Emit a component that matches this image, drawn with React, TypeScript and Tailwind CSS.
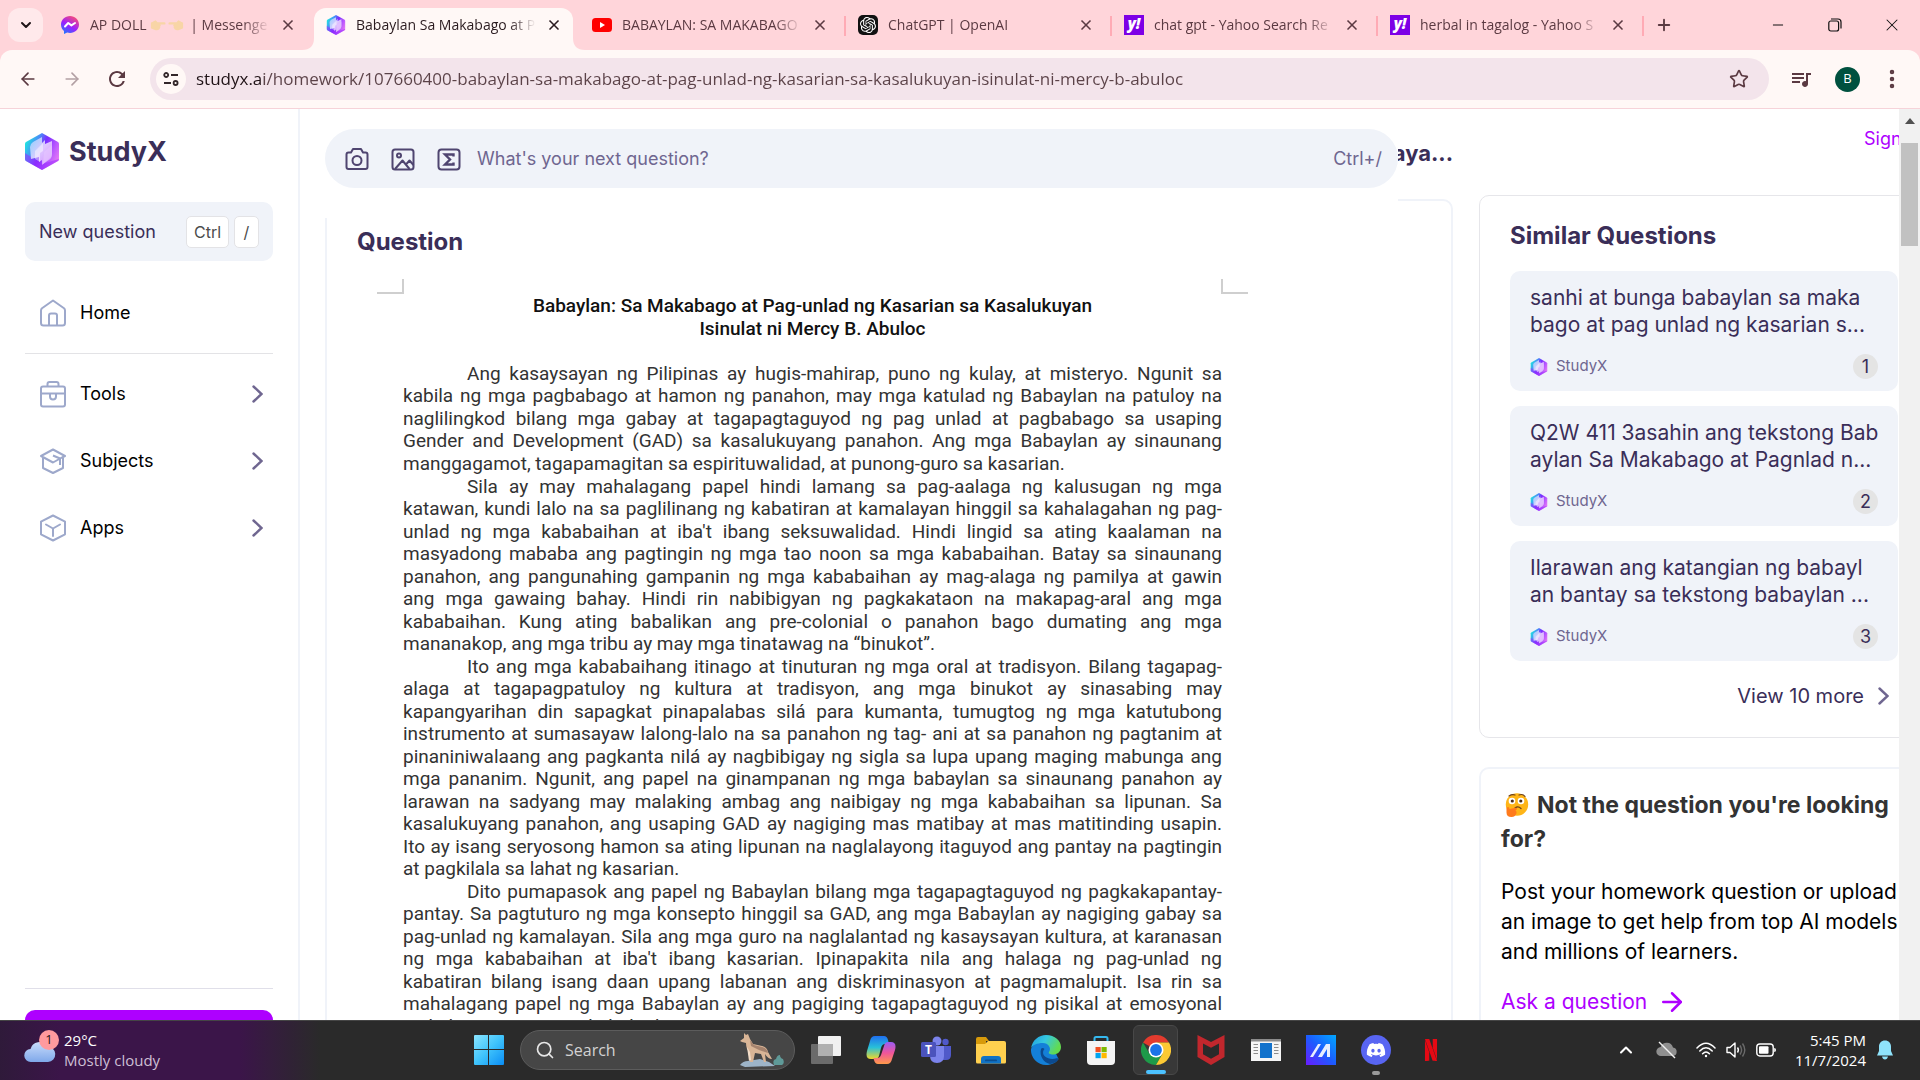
import React from "react"
import {
  ArrowLeft,
  ArrowRight,
  ChevronDown,
  ChevronUp,
  Minus,
  MoreVertical,
  Plus,
  Search,
  Star,
  X,
} from "lucide-react"
import { FaDiscord } from "react-icons/fa"
import { MdOutlineQueueMusic, MdRefresh } from "react-icons/md"
import { SiNetflix, SiOpenai } from "react-icons/si"

/* ---------- icons ---------- */

const StudyXLogo = ({ className }: { className?: string }) => (
  <svg viewBox="0 0 34 37" className={className} aria-hidden="true">
    <defs>
      <linearGradient id="sx-body" x1="0" y1="0.2" x2="1" y2="0.7">
        <stop offset="0" stopColor="#19f0dc" />
        <stop offset="0.3" stopColor="#4a8cf8" />
        <stop offset="0.5" stopColor="#7a2cff" />
        <stop offset="0.75" stopColor="#b455ff" />
        <stop offset="1" stopColor="#e87bf5" />
      </linearGradient>
      <linearGradient id="sx-page" x1="0" y1="0" x2="1" y2="1">
        <stop offset="0" stopColor="#9fd0ff" />
        <stop offset="0.5" stopColor="#efe2ff" />
        <stop offset="1" stopColor="#d48bff" />
      </linearGradient>
    </defs>
    <path d="M17 0 33 9q1 .6 1 2v15q0 1.400-1 2L17 37 1 28q-1-.6-1-2V11q0-1.400 1-2Z" fill="url(#sx-body)" />
    <path d="M0 20v6q0 1.400 1 2l16 9 16-9q1-.6 1-2l-17 5Z" fill="#9a2bff" opacity=".55" />
    <path d="M5 14q0-3 3-5l9-5v6l3-3v4l7-3v13q0 3-3 5l-7 6v-5l-3 2v-5l-8 2Z" fill="url(#sx-page)" opacity=".85" />
    <path d="m10 18 8-8v8l-3 2v9l-5-3Z" fill="#fff" opacity=".45" />
    <path d="m19 19 8-7v9q0 4-3 6l-6 4Z" fill="#e4c4ff" opacity=".7" />
  </svg>
)

const MessengerIcon = () => (
  <svg viewBox="0 0 20 20" className="size-5 shrink-0" aria-hidden="true">
    <defs>
      <linearGradient id="msgr" x1="0.2" y1="1" x2="0.8" y2="0">
        <stop offset="0" stopColor="#1a7bff" />
        <stop offset="0.45" stopColor="#9b1fff" />
        <stop offset="1" stopColor="#ff4f6e" />
      </linearGradient>
    </defs>
    <path d="M10 1c5 0 9 3.700 9 8.500S15 18 10 18q-1.500 0-2.800-.4L4 19v-3C2.200 14.500 1 12.200 1 9.500 1 4.700 5 1 10 1Z" fill="url(#msgr)" />
    <path d="m5 11.500 3.200-3.500 3.200 2.400L15 8" stroke="#fff" strokeWidth="2" fill="none" strokeLinejoin="round" strokeLinecap="round" />
  </svg>
)

const YoutubeIcon = () => (
  <svg viewBox="0 0 20 20" className="size-5 shrink-0" aria-hidden="true">
    <rect x="0" y="3" width="20" height="14" rx="3.500" fill="#f00" />
    <path d="m8 7 5 3-5 3Z" fill="#fff" />
  </svg>
)

const OpenAiTile = () => (
  <span className="flex size-5 shrink-0 items-center justify-center rounded-[5px] bg-[#111]">
    <SiOpenai className="size-4 text-white" />
  </span>
)

const YahooTile = () => (
  <span className="flex size-5 shrink-0 items-center justify-center bg-[#7d00e6] pb-1 text-[15px] font-black italic text-white">
    y!
  </span>
)

const PointingHands = () => (
  <svg viewBox="0 0 38 16" className="mx-0.5 inline-block h-4 w-[36px] align-[-3px]" fill="#f8d5a6" aria-hidden="true">
    <path d="M2 6q0-1 1-1l4-2 2 2h7q1.500 0 1.500 1.300T16 7.600h-4q1 1-.2 1.900.6 1-.4 1.800.2 1-.9 1.500Q9.500 14 7 13.500L3 12q-1 0-1-1Z" />
    <path d="M36 6q0-1-1-1l-4-2-2 2h-7q-1.500 0-1.500 1.300T22 7.600h4q-1 1 .2 1.900-.6 1 .4 1.800-.2 1 .9 1.500 1 1.200 3.500.7L35 12q1 0 1-1Z" />
  </svg>
)

const TuneIcon = () => (
  <svg viewBox="0 0 16 16" className="size-4" fill="none" stroke="#33272a" strokeWidth="1.800" aria-hidden="true">
    <circle cx="3.200" cy="4" r="2" />
    <path d="M8 4h7M1 12h7" />
    <circle cx="12.600" cy="12" r="2" />
  </svg>
)

const RestoreIcon = () => (
  <svg viewBox="0 0 14 14" className="size-3.5" fill="none" stroke="#111" strokeWidth="1.200" aria-hidden="true">
    <rect x="0.800" y="3" width="9.800" height="10" rx="2" />
    <path d="M3 1h7q3 0 3 3v6.500" />
  </svg>
)

const Chevron = ({ className }: { className?: string }) => (
  <svg viewBox="0 0 11 18" className={`h-[18px] w-[11px] ${className}`} fill="none" stroke="#6f6690" strokeWidth="2.400" strokeLinecap="round" aria-hidden="true">
    <path d="m1.500 1.500 8 7.500-8 7.500" />
  </svg>
)

const HomeIcon = () => (
  <svg viewBox="0 0 26 28" className="h-7 w-[26px]" fill="none" stroke="#9da8cb" strokeWidth="2" strokeLinejoin="round" aria-hidden="true">
    <path d="M1 11.500q0-1.500 1-2.300L13 1.500l11 7.700q1 .8 1 2.300V24q0 2.500-2.500 2.500h-19Q1 26.500 1 24Z" />
    <path d="M9 26v-9.500q0-2 2-2h4q2 0 2 2V26" />
  </svg>
)

const ToolsIcon = () => (
  <svg viewBox="0 0 26 28" className="h-7 w-[26px]" fill="none" stroke="#9da8cb" strokeWidth="2" strokeLinejoin="round" aria-hidden="true">
    <rect x="1" y="6.500" width="24" height="20" rx="2" />
    <path d="M7.500 6V4q0-2 2-2h7q2 0 2 2v2M1 13.500h24M10 14v2.500q0 3 3 3t3-3V14" />
  </svg>
)

const SubjectsIcon = () => (
  <svg viewBox="0 0 26 28" className="h-7 w-[26px]" fill="none" stroke="#9da8cb" strokeWidth="2" strokeLinejoin="round" aria-hidden="true">
    <path d="m13 2.500 12 6.500-3 1.500L13 15.500 1 9Z" />
    <path d="M3 11v10l10 5 10-5V11M13 8.500l7 3V18" />
  </svg>
)

const AppsIcon = () => (
  <svg viewBox="0 0 26 28" className="h-7 w-[26px]" fill="none" stroke="#9da8cb" strokeWidth="2" strokeLinejoin="round" aria-hidden="true">
    <path d="m13 1.500 12 6.200v12.600L13 26.500 1 20.300V7.700Z" />
    <path d="m6 10.500 7 4 7-4M13 14.500V22" strokeLinecap="round" />
  </svg>
)

const CameraIcon = () => (
  <svg viewBox="0 0 24 24" className="size-6" fill="none" stroke="#4f4570" strokeWidth="2" strokeLinejoin="round" aria-hidden="true">
    <path d="M1.500 7.500q0-2 2-2H6L8 2h8l2 3.500h2.500q2 0 2 2V20q0 2-2 2h-17q-2 0-2-2Z" />
    <circle cx="12" cy="13.500" r="4.500" />
  </svg>
)

const PictureIcon = () => (
  <svg viewBox="0 0 24 24" className="size-6" fill="none" stroke="#4f4570" strokeWidth="2" strokeLinejoin="round" aria-hidden="true">
    <rect x="1.500" y="2.500" width="21" height="20" rx="2.500" />
    <circle cx="8" cy="8.500" r="2" />
    <path d="m4 22 7.500-8.500 7 8.500M15 17.500l3.500-4 4 4.500" />
  </svg>
)

const SigmaIcon = () => (
  <svg viewBox="0 0 24 24" className="size-6" fill="none" stroke="#4f4570" strokeWidth="2" aria-hidden="true">
    <rect x="1.500" y="2.500" width="21" height="20" rx="3" />
    <path d="M16.500 9.500V7.500H8l5 5-5 5h8.500v-2" strokeWidth="2.400" />
  </svg>
)

const DoubtFace = () => (
  <svg viewBox="0 0 24 24" className="mr-2 ml-1 inline-block size-6 align-[-4px]" aria-hidden="true">
    <circle cx="12" cy="11.500" r="11.200" fill="#ffb517" />
    <circle cx="7" cy="8" r="3.300" fill="#fff" />
    <circle cx="16" cy="8" r="3.300" fill="#fff" />
    <circle cx="7.300" cy="8" r="1.600" fill="#4a2e1c" />
    <circle cx="15.800" cy="8" r="1.600" fill="#4a2e1c" />
    <path d="M4 3q3-2 6-1M14 2q4-1.500 6 1.500M10 15q3-2.500 6 .5" stroke="#6b3f1b" strokeWidth="1.200" fill="none" strokeLinecap="round" />
    <path d="M1.500 16q0-2 1.500-2 1.500 0 1.500 2l6-1.200q2 0 1.500 1.500l-1.500 1q1.500 1.500 1 3-1 3.700-5 3.700-5 0-5-4.500Z" fill="#ff7a1c" />
  </svg>
)

/* ---------- taskbar icons ---------- */

const WindowsLogo = () => (
  <svg viewBox="0 0 30 30" className="size-[30px]" aria-hidden="true">
    <defs>
      <linearGradient id="win" x1="0" y1="0" x2="30" y2="30" gradientUnits="userSpaceOnUse">
        <stop offset="0" stopColor="#8be5ff" />
        <stop offset="0.5" stopColor="#3fc3fb" />
        <stop offset="1" stopColor="#0a8df5" />
      </linearGradient>
    </defs>
    <path d="M0 1q0-1 1-1h13v14H0ZM15 0h14q1 0 1 1v13H15ZM0 15h14v15H1q-1 0-1-1ZM15 15h15v14q0 1-1 1H15Z" fill="url(#win)" />
  </svg>
)

const WeatherIcon = () => (
  <svg viewBox="0 0 32 26" className="h-[26px] w-8" aria-hidden="true">
    <defs>
      <linearGradient id="cloud" x1="0" y1="0" x2="0" y2="1">
        <stop offset="0" stopColor="#c8dcfb" />
        <stop offset="1" stopColor="#7fa8ea" />
      </linearGradient>
    </defs>
    <circle cx="23" cy="8" r="7" fill="#ff8a1c" />
    <path d="M7 25a6.500 6.500 0 0 1-.5-13A9 9 0 0 1 23 9.500 7.500 7.500 0 0 1 24 25Z" fill="url(#cloud)" />
  </svg>
)

const Wolf = () => (
  <svg viewBox="0 0 48 34" className="h-[34px] w-12" aria-hidden="true">
    <path d="M2 32q3-4 8-4l12-2 9 3 6 4-30 1Z" fill="#9db4c8" />
    <path d="M36 32q-2-5 2-6 1-4 4-4 0 3 3 4 2 4-1 6Z" fill="#5f9a98" />
    <path d="m2 8 4-3 0-5 2 2 2-1 2 5 3 5 9 2q5 1 6 6l4 7q-4 0-7-5l1 8h-2l-3-8-6-1-2 9h-3l0-9q-4-3-4-10l-4-1Z" fill="#d9b596" />
    <path d="m12 7 4 5 8 2q5 1 6 6l-9-3-8-4Z" fill="#a5836e" />
    <path d="m9 14 3 5 1 8-2 1Z" fill="#f2ddc8" />
  </svg>
)

const TaskViewIcon = () => (
  <svg viewBox="0 0 30 30" className="size-[30px]" aria-hidden="true">
    <rect x="7" y="1" width="23" height="20" rx="1" fill="#f1f1f1" />
    <rect x="0" y="9" width="22" height="20" rx="1" fill="#6b6b6b" />
    <rect x="7" y="9" width="15" height="12" fill="#b0b0b0" />
  </svg>
)

const CopilotIcon = () => (
  <svg viewBox="0 0 30 30" className="size-[30px]" aria-hidden="true">
    <defs>
      <linearGradient id="cp-a" x1="0" y1="0" x2="0" y2="1">
        <stop offset="0" stopColor="#1f6ff0" />
        <stop offset="0.5" stopColor="#28c0d8" />
        <stop offset="1" stopColor="#f0d829" />
      </linearGradient>
      <linearGradient id="cp-b" x1="0" y1="0" x2="0" y2="1">
        <stop offset="0" stopColor="#9a5cf5" />
        <stop offset="0.5" stopColor="#f0559a" />
        <stop offset="1" stopColor="#ff9a4a" />
      </linearGradient>
    </defs>
    <path d="M9 1h9q3 0 4 4l1 4h-4q-3 0-4 4l-2 8q-1 3-4 3H5q-6 0-4-8L4 6q1-5 5-5Z" fill="url(#cp-a)" />
    <path d="M21 29h-9q-3 0-4-4l-.6-2H11q3 0 4-3l3-9q1-4 4-4h3q6 0 4 8l-3 9q-1 5-5 5Z" fill="url(#cp-b)" />
  </svg>
)

const TeamsIcon = () => (
  <svg viewBox="0 0 30 30" className="size-[30px]" aria-hidden="true">
    <circle cx="24.500" cy="7" r="3.200" fill="#5059c9" />
    <circle cx="16" cy="6" r="4.500" fill="#7b83eb" />
    <path d="M21 11h9v9q0 5-5 5h-4Z" fill="#5059c9" />
    <path d="M9 11h14v10q0 7-7 7t-7-7Z" fill="#7b83eb" />
    <rect x="0" y="7" width="15" height="15" rx="1.500" fill="#4b53bc" />
    <text x="7.500" y="19" fontSize="12" fontWeight="700" textAnchor="middle" fill="#fff">T</text>
  </svg>
)

const ExplorerIcon = () => (
  <svg viewBox="0 0 30 30" className="size-[30px]" aria-hidden="true">
    <path d="M0 4q0-2 2-2h8l3 4h-3v4H0Z" fill="#d79a0b" />
    <path d="M0 9h9l3-3h16q2 0 2 2v19q0 1.500-1.500 1.500h-27Q0 28.500 0 27Z" fill="#ffd04f" />
    <path d="M5 28.500V24q0-3 3-3h14q3 0 3 3v4.500Z" fill="#1173c6" />
    <rect x="9" y="24.500" width="12" height="1.800" rx=".9" fill="#0b4f92" />
  </svg>
)

const EdgeIcon = () => (
  <svg viewBox="0 0 30 30" className="size-[30px]" aria-hidden="true">
    <defs>
      <linearGradient id="edge-top" x1="0" y1="0" x2="1" y2="0.4">
        <stop offset="0" stopColor="#1f9ce0" />
        <stop offset="0.5" stopColor="#35c8e0" />
        <stop offset="1" stopColor="#62db50" />
      </linearGradient>
    </defs>
    <path d="M0 14a15 15 0 0 0 15 16c6 0 10-2.500 12.500-6L20 8 4 7Z" fill="#1480d8" />
    <path d="M0 14C1 5 8 0 15 0c9 0 15 6 15 12 0 5-4 7.500-8 7.500-3 0-5-1-4-2.500 3-4-1-9-6-9C6 8 1 10 0 14Z" fill="url(#edge-top)" />
    <path d="M10 14c-2 7 3 14 9 15 4-.5 7-2 8.500-5 0-1-1-1-2-.7-4 1.400-8.500.7-11.500-1.800-2.500-2.300-2.500-5.500-.5-7.500-1-1.500-3-1.500-3.500 0Z" fill="#0c4a8f" />
  </svg>
)

const StoreIcon = () => (
  <svg viewBox="0 0 30 30" className="size-[30px]" aria-hidden="true">
    <path d="M8.500 8V3.500Q8.500 2 10 2h10q1.500 0 1.500 1.500V8" fill="none" stroke="#35b8ee" strokeWidth="2" />
    <path d="M1 6h28v20q0 4-4 4H5q-4 0-4-4Z" fill="#f4f4f4" />
    <rect x="9.500" y="12" width="5.200" height="5.200" fill="#f25022" />
    <rect x="15.500" y="12" width="5.200" height="5.200" fill="#7fba00" />
    <rect x="9.500" y="18" width="5.200" height="5.200" fill="#00a4ef" />
    <rect x="15.500" y="18" width="5.200" height="5.200" fill="#ffb900" />
  </svg>
)

const ChromeIcon = () => (
  <svg viewBox="0 0 30 30" className="size-[30px]" aria-hidden="true">
    <path d="M15 15 2 7.500A15 15 0 0 1 28 7.500H15Z" fill="#e33b2e" />
    <path d="M15 15l6.500 3.800L15 30A15 15 0 0 1 2 7.500l6.500 11.300Z" fill="#1e9a49" />
    <path d="M15 7.500h13A15 15 0 0 1 15 30l6.500-11.200Z" fill="#fcc934" />
    <circle cx="15" cy="15" r="7.500" fill="#fff" />
    <circle cx="15" cy="15" r="5.900" fill="#1a73e8" />
  </svg>
)

const ShieldIcon = () => (
  <svg viewBox="0 0 30 30" className="size-[30px]" aria-hidden="true">
    <path d="m1.500 0 13.500 7 13.500-7v22L15 30 1.500 22ZM7 8.500v10.700l8 4.600 8-4.600V8.500l-8 4.300Z" fill="#c1272d" fillRule="evenodd" />
  </svg>
)

const NewsWindowIcon = () => (
  <svg viewBox="0 0 30 30" className="size-[30px]" aria-hidden="true">
    <rect x="0" y="4" width="30" height="22" fill="#f5f5f5" />
    <rect x="0" y="4" width="30" height="2.500" fill="#8c8c8c" />
    <rect x="9" y="8" width="12" height="15" fill="#1272cc" />
    <path d="M2.500 9.500H7M2.500 12.500H7M2.500 15.500H7M2.500 18.500H7M23 9.500h4.500M23 12.500h4.500M23 15.500h4.500M23 18.500h4.500" stroke="#8c8c8c" />
  </svg>
)

const MyAsusIcon = () => (
  <svg viewBox="0 0 30 30" className="size-[30px]" aria-hidden="true">
    <defs>
      <linearGradient id="asus" x1="0" y1="1" x2="1" y2="0">
        <stop offset="0" stopColor="#6a1bff" />
        <stop offset="0.5" stopColor="#1c5cff" />
        <stop offset="1" stopColor="#00a8ff" />
      </linearGradient>
    </defs>
    <rect width="30" height="30" fill="url(#asus)" />
    <path d="m4 22 8-13h3L7 22ZM12 22l8-13h4v13h-3v-8l-5 8Z" fill="#e6eeff" />
  </svg>
)

const CloudOffIcon = () => (
  <svg viewBox="0 0 22 18" className="h-[18px] w-[22px]" aria-hidden="true">
    <path d="M5 15a4.500 4.500 0 0 1-.3-9A6.500 6.500 0 0 1 17 6.500 4.300 4.300 0 0 1 17 15Z" fill="#8f8f8f" />
    <path d="m3 1 16 16" stroke="#f0f0f0" strokeWidth="1.400" />
  </svg>
)

const WifiIcon = () => (
  <svg viewBox="0 0 20 16" className="h-4 w-5" fill="none" stroke="#fff" strokeWidth="1.500" strokeLinecap="round" aria-hidden="true">
    <path d="M1 6q9-9.500 18 0M3.800 9q6.200-6.500 12.400 0M6.600 11.800q3.400-3.600 6.800 0" />
    <circle cx="10" cy="14" r="1.200" fill="#fff" stroke="none" />
  </svg>
)

const VolumeIcon = () => (
  <svg viewBox="0 0 20 18" className="h-[18px] w-5" fill="none" stroke="#fff" strokeWidth="1.400" strokeLinejoin="round" aria-hidden="true">
    <path d="M1 6.500h3L9 2v14l-5-4.500H1ZM11.500 6.500q1.800 2.500 0 5" />
    <path d="M14 4.500q3.200 4.500 0 9M16.500 2.500q4.600 6.500 0 13" stroke="#6a6a6a" />
  </svg>
)

const BatteryIcon = () => (
  <svg viewBox="0 0 20 14" className="h-3.5 w-5" aria-hidden="true">
    <rect x=".8" y="1" width="16.400" height="12" rx="3" fill="none" stroke="#fff" strokeWidth="1.400" />
    <rect x="3" y="3.200" width="9.500" height="7.600" rx="1" fill="#fff" />
    <path d="M18.200 5q1.800 0 1.800 2t-1.800 2Z" fill="#fff" />
  </svg>
)

const BellIcon = () => (
  <svg viewBox="0 0 16 20" className="h-5 w-4" fill="#8fe3fb" aria-hidden="true">
    <path d="M8 .5c3.700 0 6 2.700 6 6V11l2 4.500H0L2 11V6.500c0-3.300 2.300-6 6-6ZM5 16.500h6q-.7 3-3 3t-3-3Z" />
  </svg>
)

/* ---------- data ---------- */

const tabs = [
  { title: <>AP DOLL<PointingHands /> | Messenge</>, icon: <MessengerIcon /> },
  { title: "Babaylan Sa Makabago at P", icon: <StudyXLogo className="h-5 w-5 shrink-0" />, active: true },
  { title: "BABAYLAN: SA MAKABAGO", icon: <YoutubeIcon />, divider: true },
  { title: "ChatGPT | OpenAI", icon: <OpenAiTile />, divider: true },
  { title: "chat gpt - Yahoo Search Re", icon: <YahooTile />, divider: true },
  { title: "herbal in tagalog - Yahoo S", icon: <YahooTile />, divider: true },
]

const menu = [
  { label: "Tools", icon: <ToolsIcon /> },
  { label: "Subjects", icon: <SubjectsIcon /> },
  { label: "Apps", icon: <AppsIcon /> },
]

// The scan keeps its own line breaks, so each paragraph is a list of lines
const essay = [
  [
    "Ang kasaysayan ng Pilipinas ay hugis-mahirap, puno ng kulay, at misteryo. Ngunit sa",
    "kabila ng mga pagbabago at hamon ng panahon, may mga katulad ng Babaylan na patuloy na",
    "naglilingkod bilang mga gabay at tagapagtaguyod ng pag unlad at pagbabago sa usaping",
    "Gender and Development (GAD) sa kasalukuyang panahon. Ang mga Babaylan ay sinaunang",
    "manggagamot, tagapamagitan sa espirituwalidad, at punong-guro sa kasarian.",
  ],
  [
    "Sila ay may mahalagang papel hindi lamang sa pag-aalaga ng kalusugan ng mga",
    "katawan, kundi lalo na sa paglilinang ng kabatiran at kamalayan hinggil sa kahalagahan ng pag-",
    "unlad ng mga kababaihan at iba't ibang seksuwalidad. Hindi lingid sa ating kaalaman na",
    "masyadong mababa ang pagtingin ng mga tao noon sa mga kababaihan. Batay sa sinaunang",
    "panahon, ang pangunahing gampanin ng mga kababaihan ay mag-alaga ng pamilya at gawin",
    "ang mga gawaing bahay. Hindi rin nabibigyan ng pagkakataon na makapag-aral ang mga",
    "kababaihan. Kung ating babalikan ang pre-colonial o panahon bago dumating ang mga",
    "mananakop, ang mga tribu ay may mga tinatawag na “binukot”.",
  ],
  [
    "Ito ang mga kababaihang itinago at tinuturan ng mga oral at tradisyon. Bilang tagapag-",
    "alaga at tagapagpatuloy ng kultura at tradisyon, ang mga binukot ay sinasabing may",
    "kapangyarihan din sapagkat pinapalabas silá para kumanta, tumugtog ng mga katutubong",
    "instrumento at sumasayaw lalong-lalo na sa panahon ng tag- ani at sa panahon ng pagtanim at",
    "pinaniniwalaang ang pagkanta nilá ay nagbibigay ng sigla sa lupa upang maging mabunga ang",
    "mga pananim. Ngunit, ang papel na ginampanan ng mga babaylan sa sinaunang panahon ay",
    "larawan na sadyang may malaking ambag ang naibigay ng mga kababaihan sa lipunan. Sa",
    "kasalukuyang panahon, ang usaping GAD ay nagiging mas matibay at mas matitinding usapin.",
    "Ito ay isang seryosong hamon sa ating lipunan na naglalayong itaguyod ang pantay na pagtingin",
    "at pagkilala sa lahat ng kasarian.",
  ],
  [
    "Dito pumapasok ang papel ng Babaylan bilang mga tagapagtaguyod ng pagkakapantay-",
    "pantay. Sa pagtuturo ng mga konsepto hinggil sa GAD, ang mga Babaylan ay nagiging gabay sa",
    "pag-unlad ng kamalayan. Sila ang mga guro na naglalantad ng kasaysayan kultura, at karanasan",
    "ng mga kababaihan at iba't ibang kasarian. Ipinapakita nila ang halaga ng pag-unlad ng",
    "kabatiran bilang isang daan upang labanan ang diskriminasyon at pagmamalupit. Isa rin sa",
    "mahalagang papel ng mga Babaylan ay ang pagiging tagapagtaguyod ng pisikal at emosyonal",
    "na kalusugan ng mga kababaihan.",
  ],
]

const similar = [
  ["sanhi at bunga babaylan sa maka", "bago at pag unlad ng kasarian s..."],
  ["Q2W 411 3asahin ang tekstong Bab", "aylan Sa Makabago at Pagnlad n..."],
  ["Ilarawan ang katangian ng babayl", "an bantay sa tekstong babaylan ..."],
]

/* ---------- browser chrome ---------- */

const TabFlare = ({ side }: { side: "left" | "right" }) => (
  <svg
    viewBox="0 0 12 12"
    className={`absolute bottom-0 size-3 ${side === "left" ? "-left-3" : "-right-3"}`}
    fill="#fff8f6"
    aria-hidden="true"
  >
    <path d={side === "left" ? "M12 0v12H0Q12 12 12 0Z" : "M0 0v12h12Q0 12 0 0Z"} />
  </svg>
)

function TabStrip() {
  return (
    <div className="flex h-[50px] shrink-0 items-center bg-[#ffd5da] pl-2 text-[#5b3a42]">
      <button aria-label="Search tabs" className="mr-[5px] flex h-[34px] w-[35px] items-center justify-center rounded-xl bg-[#ffe9eb]">
        <ChevronDown className="size-4 text-[#1f1518]" strokeWidth={3} />
      </button>
      {tabs.map((tab, i) => (
        <div
          key={i}
          className={`relative flex h-[42px] w-[266px] shrink-0 items-center self-end pl-3 ${tab.active ? "text-[#2a1b1f]" : ""}`}
        >
          {tab.active && (
            <div className="absolute inset-y-0 right-[7px] left-0 rounded-t-xl bg-[#fff8f6]">
              <TabFlare side="left" />
              <TabFlare side="right" />
            </div>
          )}
          <div className="relative mb-2 flex w-full items-center">
            {tab.icon}
            <span className="ml-2.5 w-[180px] overflow-hidden text-sm leading-5 whitespace-nowrap [mask-image:linear-gradient(to_right,#000_85%,transparent)]">
              {tab.title}
            </span>
            <button aria-label="Close tab" className="ml-2 flex size-5 items-center justify-center">
              <X className="size-4" strokeWidth={2.5} />
            </button>
          </div>
          {tab.divider && <span className="absolute top-2 right-0 h-5 w-0.5 bg-[#ffabb5]" />}
        </div>
      ))}
      <button aria-label="New tab" className="ml-2.5 flex size-5 items-center justify-center">
        <Plus className="size-[18px]" strokeWidth={2.5} />
      </button>
      <div className="ml-auto flex h-full text-[#111]">
        <button aria-label="Minimize" className="flex w-[57px] items-center justify-center">
          <Minus className="size-4" strokeWidth={1.5} />
        </button>
        <button aria-label="Restore" className="flex w-[57px] items-center justify-center">
          <RestoreIcon />
        </button>
        <button aria-label="Close window" className="flex w-[57px] items-center justify-center">
          <X className="size-5" strokeWidth={1.25} />
        </button>
      </div>
    </div>
  )
}

function Toolbar() {
  return (
    <div className="bg-[#ffd5da]">
      <div className="flex h-[59px] items-center rounded-t-xl border-b border-[#f6d3d9] bg-[#fff8f6] px-4 text-[#5b3a42]">
        <button aria-label="Back" className="flex w-6 justify-center">
          <ArrowLeft className="size-5" />
        </button>
        <button aria-label="Forward" className="ml-5 flex w-6 justify-center text-[#b3a0a4]">
          <ArrowRight className="size-5" />
        </button>
        <button aria-label="Reload" className="ml-[21px] flex w-6 justify-center">
          <MdRefresh className="size-6" />
        </button>
        <div className="ml-[21px] flex h-[42px] flex-1 items-center rounded-full bg-[#f3e4eb] px-[6px]">
          <button aria-label="Site information" className="flex size-[30px] items-center justify-center rounded-full bg-[#fff8f6]">
            <TuneIcon />
          </button>
          <input
            aria-label="Address"
            className="ml-[10px] flex-1 bg-[linear-gradient(to_right,#1f1216_68px,#5b4248_68px)] bg-clip-text text-[17px] text-transparent outline-none"
            defaultValue="studyx.ai/homework/107660400-babaylan-sa-makabago-at-pag-unlad-ng-kasarian-sa-kasalukuyan-isinulat-ni-mercy-b-abuloc"
          />
          <button aria-label="Bookmark" className="mr-3 flex w-6 justify-center">
            <Star className="size-5" />
          </button>
        </div>
        <MdOutlineQueueMusic className="ml-5 size-6" />
        <button className="ml-[22px] size-[25px] rounded-full bg-[#00513f] text-[13px] text-white">B</button>
        <button aria-label="Menu" className="ml-5 flex w-6 justify-center">
          <MoreVertical className="size-6" strokeWidth={2.5} />
        </button>
      </div>
    </div>
  )
}

/* ---------- page ---------- */

function Sidebar() {
  return (
    <nav className="flex w-[300px] shrink-0 flex-col border-r-2 border-[#f0f3f9] px-[25px] pt-6 text-lg">
      <a href="#" className="flex h-[37px] items-center text-[27px] font-bold text-[#3a2e58]">
        <StudyXLogo className="mr-2.5 h-[37px] w-[34px]" />
        StudyX
      </a>
      <button className="mt-8 flex h-[59px] w-full items-center rounded-[10px] bg-[#f0f3f9] px-3.5 text-[#3a2e58]">
        New question
        <kbd className="ml-auto flex h-8 w-[43px] items-center justify-center rounded-[5px] border border-[#e3e3e6] bg-white font-[Inter] text-base text-[#4c4c4c]">
          Ctrl
        </kbd>
        <kbd className="ml-[5px] flex h-8 w-[25px] items-center justify-center rounded-[5px] border border-[#e3e3e6] bg-white font-[Inter] text-base text-[#4c4c4c]">
          /
        </kbd>
      </button>
      <a href="#" className="mt-6 flex h-14 items-center px-[15px]">
        <HomeIcon />
        <span className="ml-3.5">Home</span>
      </a>
      <hr className="mt-3 mb-3 border-[#e3e3e6]" />
      {menu.map((item) => (
        <a key={item.label} href="#" className="mb-[11px] flex h-14 items-center px-[10px] pl-[15px]">
          {item.icon}
          <span className="ml-3.5">{item.label}</span>
          <Chevron className="ml-auto" />
        </a>
      ))}
      <div className="mt-auto h-8 overflow-hidden border-t border-[#e0dfe9] pt-[21px]">
        <button aria-label="Upgrade" className="h-12 w-full rounded-[10px] bg-[#ae00ff]" />
      </div>
    </nav>
  )
}

function SearchBar() {
  return (
    <div className="absolute top-0 right-[55px] left-0 h-[109px] bg-white pt-5">
      <div className="flex h-[59px] items-center gap-[22px] rounded-full bg-[#f0f3f9] pr-4 pl-5 text-lg text-[#6f6690]">
        <button aria-label="Take a photo"><CameraIcon /></button>
        <button aria-label="Upload image"><PictureIcon /></button>
        <button aria-label="Insert formula"><SigmaIcon /></button>
        <input
          aria-label="What's your next question?"
          placeholder="What's your next question?"
          className="-ml-1.5 flex-1 outline-none placeholder:text-[#6f6690]"
        />
        <span>Ctrl+/</span>
      </div>
    </div>
  )
}

function Essay() {
  return (
    <article className="ml-[50px] w-[871px] text-[19px] text-[#333] [font-family:Roboto,sans-serif]">
      <div className="flex justify-between">
        <span className="h-[15px] w-[27px] border-r-2 border-b-2 border-[#cfcfcf]" />
        <span className="h-[15px] w-[27px] border-b-2 border-l-2 border-[#cfcfcf]" />
      </div>
      <h3 className="text-center leading-[23px] font-medium text-[#111]">
        Babaylan: Sa Makabago at Pag-unlad ng Kasarian sa Kasalukuyan
        <br />
        Isinulat ni Mercy B. Abuloc
      </h3>
      <div className="mx-[26px] mt-[22px]">
        {essay.map((lines, p) => (
          <p key={p}>
            {lines.map((line, i) => (
              <span
                key={i}
                className="block leading-[23px] whitespace-nowrap [text-align-last:justify] first:pl-16 last:[text-align-last:left] even:leading-[22px]"
              >
                {line}
              </span>
            ))}
          </p>
        ))}
      </div>
    </article>
  )
}

function Question() {
  return (
    <main className="relative ml-[25px] flex-1">
      <h1 className="pt-[26px] text-right text-[22px] leading-9 font-bold text-[#3a2e58]">aya...</h1>
      <section className="mt-7 h-[1200px] rounded-[10px] border-2 border-[#f0f3f9] pt-6">
        <h2 className="mb-5 ml-[30px] text-2xl leading-[34px] font-bold text-[#3a2e58]">Question</h2>
        <Essay />
      </section>
      <SearchBar />
    </main>
  )
}

function Aside() {
  return (
    <aside className="ml-[26px] w-[420px] shrink-0 overflow-hidden">
      <div className="w-[450px]">
        <div className="h-[86px] pt-4 pl-[385px] text-lg whitespace-nowrap text-[#ae00ff]">
          <a href="#">Sign in</a>
        </div>
        <section className="h-[543px] rounded-[10px] border border-[#e6e6ea] pt-[23px] pl-[30px]">
          <h2 className="text-2xl leading-[34px] font-bold text-[#3a2e58]">Similar Questions</h2>
          <ul className="mt-[18px] flex w-[388px] flex-col gap-[15px]">
            {similar.map((lines, i) => (
              <li key={i} className="h-[120px] rounded-[10px] bg-[#f0f3f9] px-5 pt-[13px]">
                <a href="#" className="block text-[21px] leading-[27px] whitespace-nowrap text-[#3a2e58]">
                  {lines[0]}
                  <br />
                  {lines[1]}
                </a>
                <div className="mt-4 flex items-center text-[15px] text-[#6f6690]">
                  <StudyXLogo className="mr-2 h-[18px] w-[18px]" />
                  StudyX
                  <span className="ml-auto flex size-[25px] items-center justify-center rounded-full bg-[#e4e4e4] text-lg text-[#3a2e58]">
                    {i + 1}
                  </span>
                </div>
              </li>
            ))}
          </ul>
          <a href="#" className="mt-[18px] flex w-[379px] items-center justify-end text-xl leading-[34px] text-[#3a2e58]">
            View 10 more
            <Chevron className="ml-3.5" />
          </a>
        </section>
        <section className="mt-[29px] h-[600px] rounded-[10px] border-2 border-[#f0f3f9] px-5 pt-[19px] text-[21px] whitespace-nowrap">
          <h2 className="text-[23px] leading-[34px] font-bold text-[#333]">
            <DoubtFace />
            Not the question you're looking
            <br />
            for?
          </h2>
          <p className="mt-[21px] leading-[30px] text-black">
            Post your homework question or upload
            <br />
            an image to get help from top AI models
            <br />
            and millions of learners.
          </p>
          <a href="#" className="mt-5 flex items-center leading-[30px] text-[#ae00ff]">
            Ask a question
            <ArrowRight className="ml-2.5 size-[30px]" />
          </a>
        </section>
      </div>
    </aside>
  )
}

function Scrollbar() {
  return (
    <div className="flex w-[21px] shrink-0 flex-col items-center bg-[#f1f1f1]">
      <svg viewBox="0 0 10 6" className="mt-[9px] h-1.5 w-2.5" aria-hidden="true">
        <path d="m5 0 5 6H0Z" fill="#505050" />
      </svg>
      <span className="mt-[19px] h-[103px] w-[17px] bg-[#c1c1c1]" />
    </div>
  )
}

/* ---------- taskbar ---------- */

const apps = [
  { name: "Task view", icon: <TaskViewIcon /> },
  { name: "Copilot", icon: <CopilotIcon /> },
  { name: "Teams", icon: <TeamsIcon /> },
  { name: "File Explorer", icon: <ExplorerIcon /> },
  { name: "Edge", icon: <EdgeIcon /> },
  { name: "Store", icon: <StoreIcon /> },
  { name: "Chrome", icon: <ChromeIcon />, focused: true },
  { name: "McAfee", icon: <ShieldIcon /> },
  { name: "News", icon: <NewsWindowIcon /> },
  { name: "MyASUS", icon: <MyAsusIcon /> },
  {
    name: "Discord",
    icon: (
      <span className="flex size-[30px] items-center justify-center rounded-full bg-[#5865f2]">
        <FaDiscord className="size-5 text-white" />
      </span>
    ),
    running: true,
  },
  { name: "Netflix", icon: <SiNetflix className="size-[22px] text-[#e50914]" /> },
]

function Taskbar() {
  return (
    <footer className="flex h-[60px] shrink-0 items-center border-t border-[#454545] bg-[#2a2a2a] bg-[linear-gradient(to_right,#2f1a3a,#3b1549_60px,#3b1549_240px,#2a2a2a_320px)] pr-[27px] pb-0.5 text-white">
      <div className="relative flex w-[474px] items-center pl-6">
        <WeatherIcon />
        <span className="absolute top-0 left-[39px] flex size-5 items-center justify-center rounded-full bg-[#ff9a9e] text-[13px] text-[#2a1515]">
          1
        </span>
        <div className="ml-2 text-[15px] leading-5">
          29°C
          <div className="text-[#cdbfd4]">Mostly cloudy</div>
        </div>
      </div>
      <button aria-label="Start"><WindowsLogo /></button>
      <label className="ml-4 flex h-10 w-[275px] items-center rounded-full border border-[#5c5c5c] bg-[#464646] pr-2 pl-3.5">
        <Search className="size-5 shrink-0 text-[#e6e6e6]" />
        <input
          placeholder="Search"
          aria-label="Search"
          className="ml-2.5 w-0 flex-1 text-base outline-none placeholder:text-[#d2d2d2]"
        />
        <Wolf />
      </label>
      <div className="ml-[3px] flex">
        {apps.map((app) => (
          <button
            key={app.name}
            aria-label={app.name}
            className={`relative mx-[5px] flex h-[50px] w-[45px] items-center justify-center rounded-md ${
              app.focused ? "border border-[#484848] bg-[#383838]" : ""
            }`}
          >
            {app.icon}
            {app.focused && <span className="absolute bottom-0 h-1 w-5 rounded-full bg-[#4cc2ff]" />}
            {app.running && <span className="absolute bottom-0 h-1 w-2 rounded-full bg-[#9a9a9a]" />}
          </button>
        ))}
      </div>
      <div className="ml-auto flex items-center">
        <ChevronUp className="size-5" strokeWidth={2.5} />
        <span className="ml-5"><CloudOffIcon /></span>
        <span className="ml-[18px]"><WifiIcon /></span>
        <span className="ml-2.5"><VolumeIcon /></span>
        <span className="ml-2.5"><BatteryIcon /></span>
        <div className="ml-3 w-[78px] text-right text-[15px] leading-5 whitespace-nowrap">
          5:45 PM
          <br />
          11/7/2024
        </div>
        <span className="ml-[11px]"><BellIcon /></span>
      </div>
    </footer>
  )
}

export default function App() {
  return (
    <div className="flex h-screen flex-col overflow-hidden bg-white [font-family:'Open_Sans','Noto_Sans',sans-serif]">
      <TabStrip />
      <Toolbar />
      <div className="flex min-h-0 flex-1 overflow-hidden text-black [font-family:Inter,sans-serif]">
        <Sidebar />
        <Question />
        <Aside />
        <Scrollbar />
      </div>
      <Taskbar />
    </div>
  )
}
